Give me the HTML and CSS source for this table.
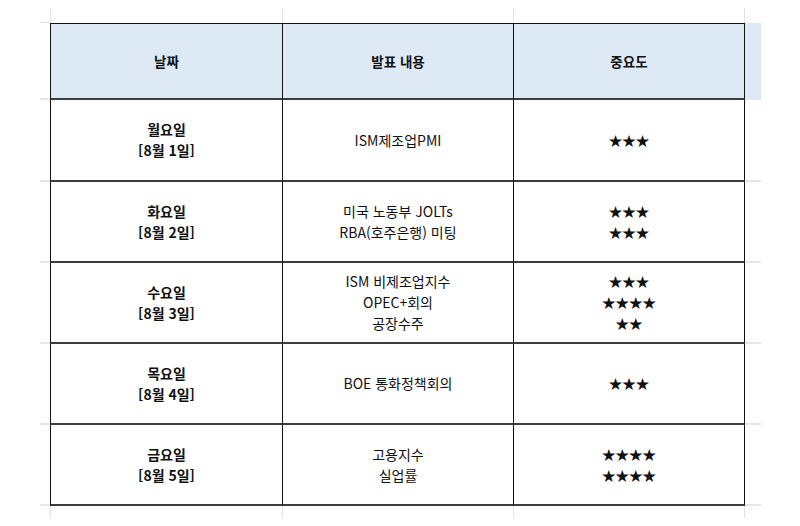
FILE: index.html
```html
<!DOCTYPE html>
<html lang="ko">
<head>
<meta charset="utf-8">
<link rel="stylesheet" href="styles.css">
</head>
<body>
<div class="sheet">
  <div class="stub"></div>
  <div class="stub top first"></div>
  <div class="stub top"></div>
  <div class="stub top"></div>
  <div class="stub"></div>

  <div class="side"></div>
  <div class="cell head first">날짜</div>
  <div class="cell head">발표 내용</div>
  <div class="cell head">중요도</div>
  <div class="side fill"></div>

  <div class="side"></div>
  <div class="cell day first">월요일<br>[8월 1일]</div>
  <div class="cell">ISM제조업PMI</div>
  <div class="cell stars">★★★</div>
  <div class="side"></div>

  <div class="side"></div>
  <div class="cell day first">화요일<br>[8월 2일]</div>
  <div class="cell">미국 노동부 JOLTs<br>RBA(호주은행) 미팅</div>
  <div class="cell stars">★★★<br>★★★</div>
  <div class="side"></div>

  <div class="side"></div>
  <div class="cell day first">수요일<br>[8월 3일]</div>
  <div class="cell">ISM 비제조업지수<br>OPEC+회의<br>공장수주</div>
  <div class="cell stars">★★★<br>★★★★<br>★★</div>
  <div class="side"></div>

  <div class="side"></div>
  <div class="cell day first">목요일<br>[8월 4일]</div>
  <div class="cell">BOE 통화정책회의</div>
  <div class="cell stars">★★★</div>
  <div class="side"></div>

  <div class="side"></div>
  <div class="cell day first">금요일<br>[8월 5일]</div>
  <div class="cell">고용지수<br>실업률</div>
  <div class="cell stars">★★★★<br>★★★★</div>
  <div class="side"></div>

  <div class="stub"></div>
  <div class="stub bottom first"></div>
  <div class="stub bottom"></div>
  <div class="stub bottom"></div>
  <div class="stub"></div>
</div>
</body>
</html>
```

FILE: styles.css
```css
* { box-sizing: border-box; }
html, body { margin: 0; padding: 0; background: #fff; }
body {
  font-family: "Noto Sans CJK KR", "Noto Sans", sans-serif;
  font-size: 14px;
  color: #111;
}
.sheet {
  display: grid;
  grid-template-columns: 10px 233px 231px 231px 16px;
  grid-template-rows: 15px 77px 82px 81px 81px 81px 81px 12px;
  margin: 8px 0 0 40px;
}
.stub.top { border-right: 1px solid #e2e2e2; }
.stub.top.first { border-left: 1px solid #e2e2e2; }
.stub.bottom { border-right: 1px solid #e2e2e2; }
.stub.bottom.first { border-left: 1px solid #e2e2e2; }
.side { border-bottom: 2px solid #e6e6e6; }
.side.fill { background: #dde9f5; }
.sheet > .stub:first-child { border-bottom: 1px solid #e2e2e2; }
.cell {
  display: flex;
  align-items: center;
  justify-content: center;
  text-align: center;
  line-height: 21px;
  border-right: 1px solid #111;
  border-bottom: 2px solid #3c3c3c;
}
.cell.first { border-left: 1px solid #111; }
.cell.head {
  background: #dde9f5;
  border-top: 1px solid #111;
  font-weight: 700;
  font-size: 13.5px;
  padding-top: 1px;
}
.cell.day { font-weight: 700; }
.cell.stars { font-size: 13.5px; }
```
